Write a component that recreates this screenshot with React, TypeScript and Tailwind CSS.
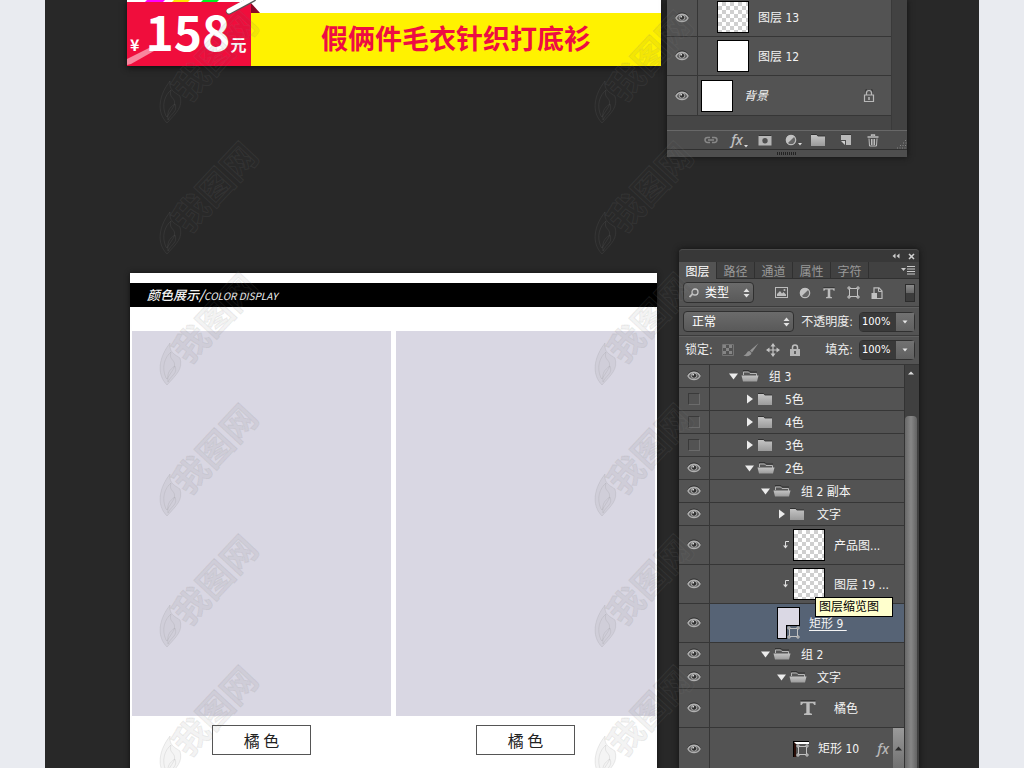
import { useState } from "react";
import type { ReactNode } from "react";

const uiFont = "font-['DejaVu_Sans_Condensed','Noto_Sans_CJK_SC',sans-serif]";
const artFont = "font-['Noto_Sans_CJK_SC',sans-serif]";
const checker =
  "bg-[conic-gradient(#cfcfcf_25%,#fff_0_50%,#cfcfcf_0_75%,#fff_0)] bg-[length:8px_8px]";

function Eye() {
  return (
    <svg width="14" height="12" viewBox="0 0 14 12" fill="none">
      <path d="M1 5C4-.2 10-.2 13 5" stroke="#2d2d2d" strokeWidth="1.2" />
      <path d="M1 6C3.5 1 10.500 1 13 6C10.500 10.800 3.500 10.800 1 6Z" stroke="#b0b0b0" strokeWidth="1.4" fill="#5c5c5c" />
      <circle cx="7" cy="5.600" r="2.700" fill="#303030" stroke="#b8b8b8" strokeWidth=".9" />
      <circle cx="6.200" cy="4.700" r=".9" fill="#ddd" />
    </svg>
  );
}

function EyeToggle({ name, on = true }: { name: string; on?: boolean }) {
  const [visible, setVisible] = useState(on);
  return (
    <button
      type="button"
      aria-label={`可见性 ${name}`}
      aria-pressed={visible}
      onClick={() => setVisible(!visible)}
      className="flex w-[31px] shrink-0 items-center justify-center self-stretch border-r border-[#363636] bg-[#535353]"
    >
      {visible ? <Eye /> : <span className="size-3 border border-[#6b6b6b] border-t-[#3a3a3a] border-l-[#3a3a3a]" />}
    </button>
  );
}

function Folder({ open }: { open?: boolean }) {
  return (
    <svg width="18" height="14" viewBox="0 0 18 14" className="shrink-0">
      <defs>
        <linearGradient id="folder" x1="0" y1="0" x2="0" y2="1">
          <stop offset="0" stopColor="#c4c4c4" />
          <stop offset="1" stopColor="#9b9b9b" />
        </linearGradient>
      </defs>
      {open ? (
        <>
          <path d="M2.500 6V3h5l1.500 1.500h6.500V7" fill="#555" stroke="#b5b5b5" />
          <path d="M2 1.500h6l1.500 1.500H16" fill="none" stroke="#333" />
          <path d="M.5 6.500H17.500L16 12.500H2Z" fill="url(#folder)" />
        </>
      ) : (
        <>
          <path d="M1 1.500h5.500L8 3h7" fill="none" stroke="#303030" />
          <path d="M1 2H6.500L8 3.500H15V13H1Z" fill="url(#folder)" />
        </>
      )}
    </svg>
  );
}

function Triangle({ open }: { open?: boolean }) {
  return (
    <svg width="12" height="12" viewBox="0 0 12 12" className="shrink-0">
      <path d={open ? "M2 3.500H11L6.500 9.500Z" : "M4 1.500V10.500L10 6Z"} fill="#ececec" />
    </svg>
  );
}

function VectorBox({ size = 13 }: { size?: number }) {
  return (
    <svg width={size} height={size} viewBox="0 0 13 13" fill="none" stroke="#c2c2c2">
      <path d="M2.500 2.500h8v8h-8z" />
      <path d="M1 1h2v2H1zM10 1h2v2h-2zM1 10h2v2H1zM10 10h2v2h-2z" fill="#666" />
    </svg>
  );
}

function TypeIcon({ size = 12 }: { size?: number }) {
  return (
    <svg width={size} height={size} viewBox="0 0 16 16">
      <path d="M.5 1.500h15V5h-1.200L13 3.200H9.700V13l2.300.8V15H4v-1.200l2.300-.8V3.200H3L1.700 5H.5Z" fill="#bcbcbc" />
      <path d="M.5.8h15" stroke="#2e2e2e" />
    </svg>
  );
}

function HalfCircle() {
  return (
    <svg width="12" height="12" viewBox="0 0 12 12">
      <circle cx="6" cy="6" r="4.700" fill="#666" stroke="#bcbcbc" strokeWidth="1.200" />
      <path d="M9.600 2.400A5 5 0 0 0 2.400 9.600Z" fill="#c2c2c2" />
    </svg>
  );
}

function LockIcon() {
  return (
    <svg width="12" height="14" viewBox="0 0 12 14">
      <path d="M3.500 7V4.500a2.500 2.500 0 0 1 5 0V7" fill="none" stroke="#c0c0c0" strokeWidth="1.500" />
      <rect x="1" y="6" width="10" height="7" fill="#b5b5b5" />
      <path d="M6 8v3" stroke="#444" strokeWidth="1.500" />
    </svg>
  );
}

function LockOutline() {
  return (
    <svg width="12" height="14" viewBox="0 0 12 14" fill="none" stroke="#b8b8b8">
      <path d="M2.500 2.500a3.500 3.500 0 0 1 7 0" stroke="#333" />
      <path d="M3.500 6V4a2.500 2.500 0 0 1 5 0V6M1.500 6h9v6.500h-9z" strokeWidth="1.200" />
      <path d="M6 8v3" strokeWidth="1.500" />
    </svg>
  );
}

function ClipArrow() {
  return (
    <svg width="8" height="10" viewBox="0 0 8 10" className="shrink-0">
      <path d="M7 1.500H3.500V6" fill="none" stroke="#ddd" />
      <path d="M1 5.500h5L3.500 8.500Z" fill="#ddd" />
    </svg>
  );
}

function GroupRow({ name, depth, open, on = true }: { name: string; depth: 1 | 2 | 3 | 4; open?: boolean; on?: boolean }) {
  const indent = { 1: "pl-[17px]", 2: "pl-[33px]", 3: "pl-[49px]", 4: "pl-[65px]" }[depth];
  return (
    <li className="flex h-[23px] items-center border-b border-[#363636] bg-[#535353]">
      <EyeToggle name={name} on={on} />
      <button type="button" aria-expanded={!!open} className={`flex items-center ${indent}`}>
        <Triangle open={open} />
        <span className="ml-0.5 flex"><Folder open={open} /></span>
        <span className="ml-2.5 pt-0.5">{name}</span>
      </button>
    </li>
  );
}

function LayerRow({ name, children, className = "", tail, height = "h-[39px]" }: { name: string; children: ReactNode; className?: string; tail?: ReactNode; height?: string }) {
  return (
    <li className={`flex items-center border-b border-[#363636] ${height}`}>
      <EyeToggle name={name} />
      <div className={`flex h-full min-w-0 flex-1 items-center ${className}`}>
        {children}
        {tail}
      </div>
    </li>
  );
}

function Price() {
  return (
    <div className="flex">
      <div className="relative h-[66px] w-[124px] bg-white pt-0.5">
        <div className="flex h-16 items-end bg-[#f00d3c] pl-[3px] text-white">
          <span className="pb-3 text-base leading-5 font-bold">¥</span>
          <span className="pb-2 pl-1.5 text-5xl leading-[56px] font-bold">158</span>
          <span className="pb-3 text-base leading-5 font-bold">元</span>
        </div>
        <svg className="absolute top-0 left-0" width="134" height="66" viewBox="0 0 134 66">
          <path d="M20 0h18l-2 2H18Z" fill="#f0f" />
          <path d="M47 0h16l-2 2H45Z" fill="#ffe600" />
          <path d="M76 0h16l-2 2H74Z" fill="#00f020" />
          <path d="M124 3v10h9Z" fill="#8c0726" />
          <path d="M102 11.500L126-1" stroke="#555" strokeWidth="6" strokeLinecap="round" />
          <path d="M102 11L126-2" stroke="#fff" strokeWidth="5" strokeLinecap="round" />
          <path d="M0 59L24 47L27 51L4 64L0 65Z" fill="#fff" opacity=".5" />
        </svg>
      </div>
      <div className="flex-1 bg-white pt-[13px]">
        <h1 className="h-[53px] bg-[#fff200] text-center text-[27px] leading-[50px] font-bold text-[#ee0d42]">假俩件毛衣针织打底衫</h1>
      </div>
    </div>
  );
}

function BottomTools() {
  const tools: { label: string; icon: ReactNode }[] = [
    {
      label: "链接图层",
      icon: (
        <svg width="14" height="8" viewBox="0 0 14 8" fill="none" stroke="#888" strokeWidth="1.500">
          <path d="M6 1.500H3.500a2.500 2.500 0 0 0 0 5H6M8 1.500h2.500a2.500 2.500 0 0 1 0 5H8M4 4h6" />
        </svg>
      ),
    },
    {
      label: "添加图层样式",
      icon: (
        <span className="flex items-end pl-1 font-['Noto_Sans',sans-serif] text-sm leading-4 font-medium text-[#c0c0c0] italic">
          fx
          <svg width="5" height="3" viewBox="0 0 5 3"><path d="M1 0h4L3 2.500Z" fill="#ddd" /></svg>
        </span>
      ),
    },
    {
      label: "添加蒙版",
      icon: (
        <svg width="14" height="11" viewBox="0 0 14 11">
          <path d="M1 .5h12" stroke="#333" />
          <rect x=".5" y="1" width="13" height="9.500" fill="#b5b5b5" />
          <circle cx="7" cy="5.700" r="2.700" fill="#505050" />
        </svg>
      ),
    },
    {
      label: "创建调整图层",
      icon: (
        <span className="flex items-end pl-1">
          <HalfCircle />
          <svg width="5" height="3" viewBox="0 0 5 3"><path d="M1 0h4L3 2.500Z" fill="#ddd" /></svg>
        </span>
      ),
    },
    { label: "创建新组", icon: <Folder /> },
    {
      label: "创建新图层",
      icon: (
        <svg width="12" height="12" viewBox="0 0 12 12">
          <path d="M1 1h10v10H6V6H1Z" fill="#b8b8b8" />
          <path d="M1 7h4v4Z" fill="#cfcfcf" />
          <path d="M1 .5h10" stroke="#333" />
        </svg>
      ),
    },
    {
      label: "删除图层",
      icon: (
        <svg width="12" height="13" viewBox="0 0 12 13" fill="none" stroke="#bcbcbc">
          <path d="M4.500 2V1h3v1M.5 3h11" strokeWidth="1.300" />
          <path d="M2 4.500l.5 7.500h7l.5-7.500M4.500 5v6M6 5v6M7.500 5v6" />
        </svg>
      ),
    },
  ];
  return (
    <div className="flex h-5 items-center border-y border-t-[#686868] border-b-[#303030] bg-[#4c4c4c] pl-[30px]">
      {tools.map((t) => (
        <button key={t.label} type="button" aria-label={t.label} className="flex w-[27px] items-center justify-center">
          {t.icon}
        </button>
      ))}
      <svg className="mt-auto ml-auto" width="11" height="11" viewBox="0 0 11 11">
        <path d="M1 10h10M4 7.500h7M7 5h4M9 2.500h2" stroke="#858585" strokeDasharray="1 1.500" />
      </svg>
    </div>
  );
}

function SmallPanel() {
  return (
    <aside aria-label="图层面板" className={`w-60 shrink-0 bg-[#424242] text-xs text-[#f2f2f2] shadow-[0_0_6px_#111] ${uiFont}`}>
      <ul className="mr-[15px] border-r border-[#3a3a3a] bg-[#464646] pb-[14px]">
        <li className="flex h-[37px] items-center border-b border-[#363636] bg-[#535353]">
          <EyeToggle name="图层 13" />
          <span className={`mb-0.5 ml-[19px] size-8 border border-black ${checker}`} />
          <span className="ml-[9px]">图层 13</span>
        </li>
        <li className="flex h-[39px] items-center border-b border-[#363636] bg-[#535353]">
          <EyeToggle name="图层 12" />
          <span className="ml-[19px] size-8 border border-black bg-white" />
          <span className="ml-[9px] pt-0.5">图层 12</span>
        </li>
        <li className="flex h-10 items-center border-b border-[#363636] bg-[#535353]">
          <EyeToggle name="背景" />
          <span className="ml-[3px] size-8 border border-black bg-white" />
          <span className="ml-[11px] italic">背景</span>
          <span className="mr-4 ml-auto"><LockOutline /></span>
        </li>
      </ul>
      <BottomTools />
      <div className="flex h-[7px] items-center justify-center bg-[#4e4e4e]">
        <span className="h-[3px] w-5 bg-[repeating-linear-gradient(90deg,#222_0_1px,#4e4e4e_1px_2px)]" />
      </div>
    </aside>
  );
}

function SelectMarks() {
  return (
    <svg className="pointer-events-none absolute top-1/2 right-1 -translate-y-1/2" width="7" height="10" viewBox="0 0 7 10">
      <path d="M.5 4L3.500 .5L6.500 4ZM.5 6L3.500 9.500L6.500 6Z" fill="#e2e2e2" />
    </svg>
  );
}

function Percent({ id, label }: { id: string; label: string }) {
  return (
    <div className="flex items-center">
      <label htmlFor={id} className="mr-1.5">{label}</label>
      <div className="flex h-5 rounded-sm border border-[#303030]">
        <input id={id} defaultValue="100%" className="w-9 bg-[#3a3a3a] pl-0.5 text-[11px] text-white outline-none" />
        <button type="button" aria-label={`${label}选项`} className="flex w-[18px] items-center justify-center bg-linear-to-b from-[#727272] to-[#606060]">
          <svg width="6" height="4" viewBox="0 0 6 4"><path d="M.5.5h5L3 3.500Z" fill="#e6e6e6" /></svg>
        </button>
      </div>
    </div>
  );
}

function PanelControls() {
  const selectBox = "w-full appearance-none rounded-sm border border-[#303030] bg-linear-to-b from-[#6b6b6b] to-[#595959] h-[21px] text-white outline-none";
  const filters: { label: string; icon: ReactNode }[] = [
    {
      label: "像素图层",
      icon: (
        <svg width="13" height="11" viewBox="0 0 13 11">
          <rect x=".5" y=".5" width="12" height="10" fill="none" stroke="#bcbcbc" />
          <path d="M2 9V7l3-3 2 2.500L8.500 5 11 7.500V9Z" fill="#bcbcbc" />
          <circle cx="9.500" cy="3" r="1" fill="#bcbcbc" />
        </svg>
      ),
    },
    { label: "调整图层", icon: <HalfCircle /> },
    { label: "文字图层", icon: <TypeIcon /> },
    { label: "形状图层", icon: <VectorBox size={13} /> },
    {
      label: "智能对象",
      icon: (
        <svg width="12" height="12" viewBox="0 0 12 12">
          <path d="M3 7V.8h5L11 4v7.500H6" fill="none" stroke="#bcbcbc" strokeWidth="1.200" />
          <path d="M7.500 1v3.500H11" fill="none" stroke="#bcbcbc" />
          <rect x=".5" y="6" width="5.500" height="6" fill="#c2c2c2" />
        </svg>
      ),
    },
  ];
  return (
    <div className="bg-[#535353] leading-4 text-[#eee]">
      <div className="flex h-7 items-center border-b border-[#3b3b3b] px-1">
        <div className="relative w-[71px]">
          <svg className="pointer-events-none absolute top-1.5 left-1.5" width="10" height="10" viewBox="0 0 10 10" fill="none" stroke="#c8c8c8">
            <circle cx="6" cy="4" r="3" strokeWidth="1.300" />
            <path d="M3.500 6L.5 9" strokeWidth="1.800" />
          </svg>
          <select aria-label="过滤类型" className={`${selectBox} pl-[21px]`}>
            <option>类型</option>
          </select>
          <SelectMarks />
        </div>
        <div className="ml-[15px] flex">
          {filters.map((f) => (
            <button key={f.label} type="button" aria-label={f.label} className="flex w-6 items-center justify-center">{f.icon}</button>
          ))}
        </div>
        <button type="button" aria-label="打开过滤" className="ml-auto flex h-[18px] w-2.5 flex-col border border-[#2c2c2c] bg-[#3c3c3c]">
          <span className="h-2 w-full bg-linear-to-b from-[#8a8a8a] to-[#666]" />
        </button>
      </div>
      <div className="flex h-[29px] items-center justify-between border-t border-b border-t-[#606060] border-b-[#3b3b3b] px-1">
        <div className="relative w-[111px]">
          <select aria-label="混合模式" className={`${selectBox} pl-2`}>
            <option>正常</option>
          </select>
          <SelectMarks />
        </div>
        <Percent id="opacity" label="不透明度:" />
      </div>
      <div className="flex h-[29px] items-center border-t border-b border-t-[#606060] border-b-[#363636] pr-1 pb-0.5 pl-1.5">
        <span>锁定:</span>
        <div className="ml-1 flex">
          <button type="button" aria-label="锁定透明像素" className="flex w-[23px] items-center justify-center">
            <svg width="12" height="12" viewBox="0 0 12 12" fill="#858585">
              <path d="M1 1h3v3H1zM7 1h3v3H7zM4 4h3v3H4zM1 7h3v3H1zM7 7h3v3H7z" />
              <path d="M.5.5h11v11H.5z" fill="none" stroke="#757575" />
            </svg>
          </button>
          <button type="button" aria-label="锁定图像像素" className="flex w-[22px] items-center justify-center">
            <svg width="16" height="14" viewBox="0 0 16 14" fill="#939393">
              <path d="M15.500.3L7 7.500l2 2ZM6.500 8c-3 0-2.500 3.500-6 4.500 3 1.500 8 .5 8-2.500Z" />
            </svg>
          </button>
          <button type="button" aria-label="锁定位置" className="flex w-[22px] items-center justify-center">
            <svg width="14" height="14" viewBox="0 0 14 14">
              <path d="M7 2v10M2 7h10" stroke="#c4c4c4" strokeWidth="1.200" />
              <path d="M7 0L9.500 3.500h-5ZM7 14L9.500 10.500h-5ZM0 7L3.500 4.500v5ZM14 7L10.500 4.500v5Z" fill="#c4c4c4" />
            </svg>
          </button>
          <button type="button" aria-label="锁定全部" className="flex w-[22px] items-center justify-center"><LockIcon /></button>
        </div>
        <div className="ml-auto"><Percent id="fill" label="填充:" /></div>
      </div>
    </div>
  );
}

function MainPanel() {
  const tabs = ["图层", "路径", "通道", "属性", "字符"];
  return (
    <aside aria-label="图层" className={`w-60 shrink-0 rounded-t bg-[#3f3f3f] text-xs text-[#f4f4f4] shadow-[0_0_6px_#111] ${uiFont}`}>
      <div className="flex h-[13px] items-center justify-end gap-2 rounded-t border-t border-[#4c4c4c] bg-[#383838] pr-1">
        <button type="button" aria-label="折叠">
          <svg width="8" height="6" viewBox="0 0 8 6" className="block"><path d="M3.500.5v5L.5 3ZM7.500.5v5L4.500 3Z" fill="#ccc" /></svg>
        </button>
        <button type="button" aria-label="关闭">
          <svg width="7" height="7" viewBox="0 0 7 7" className="block"><path d="M1 1L6 6M6 1L1 6" stroke="#d0d0d0" strokeWidth="1.500" /></svg>
        </button>
      </div>
      <div role="tablist" className="flex h-[17px] bg-[#414141]">
        {tabs.map((t, i) => (
          <button
            key={t}
            type="button"
            role="tab"
            aria-selected={i === 0}
            className={`w-[38px] border-r border-[#303030] pt-0.5 leading-4 ${i === 0 ? "bg-[#535353] text-white" : "border-b text-[#999]"}`}
          >
            {t}
          </button>
        ))}
        <button type="button" aria-label="面板菜单" className="flex flex-1 items-center justify-end border-b border-[#303030] pr-1">
          <svg width="14" height="9" viewBox="0 0 14 9">
            <path d="M0 2h5L2.500 5Z" fill="#c8c8c8" />
            <path d="M6 .5h8M6 3h8M6 5.500h8M6 8h8" stroke="#c8c8c8" />
          </svg>
        </button>
      </div>
      <PanelControls />
      <div className="flex">
        <ul className="min-w-0 flex-1 bg-[#535353]">
          <GroupRow name="组 3" depth={1} open />
          <GroupRow name="5色" depth={2} on={false} />
          <GroupRow name="4色" depth={2} on={false} />
          <GroupRow name="3色" depth={2} on={false} />
          <GroupRow name="2色" depth={2} open />
          <GroupRow name="组 2 副本" depth={3} open />
          <GroupRow name="文字" depth={4} />
          <LayerRow name="产品图..." className="pl-[72px]">
            <ClipArrow />
            <span className={`ml-[3px] size-8 border border-black ${checker}`} />
            <span className="ml-[9px] pt-0.5">产品图...</span>
          </LayerRow>
          <LayerRow name="图层 19" className="relative pl-[72px]">
            <ClipArrow />
            <span className={`ml-[3px] size-8 border border-black ${checker}`} />
            <span className="ml-[9px] pt-0.5">图层 19 ...</span>
            <span role="tooltip" className="absolute top-8 left-[105px] z-10 w-[78px] border border-black bg-[#ffffcd] pl-[3px] leading-[18px] text-black">
              图层缩览图
            </span>
          </LayerRow>
          <LayerRow name="矩形 9" className="bg-[#566375] pl-[67px]">
            <span className="relative h-8 w-[23px] border border-black bg-[#dad8e4]">
              <span className="absolute top-[17px] left-2 border-t border-l border-black bg-[#566375]"><VectorBox /></span>
            </span>
            <span className="ml-[9px] pt-0.5 underline underline-offset-2">矩形 9&nbsp;</span>
          </LayerRow>
          <GroupRow name="组 2" depth={3} open />
          <GroupRow name="文字" depth={4} open />
          <LayerRow name="橘色" className="pl-[90px]">
            <TypeIcon size={16} />
            <span className="ml-[18px] pt-0.5">橘色</span>
          </LayerRow>
          <LayerRow
            name="矩形 10"
            className="pl-[83px]"
            height="h-[42px]"
            tail={
              <>
                <span className="mr-1 ml-auto font-['Noto_Sans',sans-serif] text-sm leading-4 font-medium text-[#b8b8b8] italic">fx</span>
                <button type="button" aria-label="展开效果" className="flex w-[11px] items-center justify-center self-stretch bg-linear-to-b from-[#9a9a9a] to-[#707070]">
                  <svg width="7" height="5" viewBox="0 0 7 5"><path d="M0 4.500h7L3.500.5Z" fill="#2b2b2b" /></svg>
                </button>
              </>
            }
          >
            <span className="border border-r-0 border-b-0 border-black">
              <span className="flex border-t-2 border-l-2 border-t-white border-l-[#2b0e08] bg-[#535353]"><VectorBox /></span>
            </span>
            <span className="ml-[9px]">矩形 10</span>
          </LayerRow>
        </ul>
        <div className="flex w-[15px] flex-col items-stretch border-l border-[#333] bg-[#404040] pr-0.5">
          <button type="button" aria-label="向上滚动" className="flex h-[51px] justify-center pt-1.5">
            <svg width="6" height="4" viewBox="0 0 6 4"><path d="M0 3.500h6L3 .5Z" fill="#ddd" /></svg>
          </button>
          <div className="flex-1 rounded-t-sm bg-linear-to-r from-[#686868] via-[#878787] to-[#646464]" />
        </div>
      </div>
    </aside>
  );
}

function Swatch({ name }: { name: string }) {
  return (
    <figure className="flex flex-col items-center">
      <div className="h-[385px] w-full bg-[#d9d7e3]" />
      <figcaption className="mt-[9px] h-[30px] w-[99px] border border-[#555] text-center text-base leading-7 text-[#222]">{name}</figcaption>
    </figure>
  );
}

function Watermark() {
  return (
    <svg className="block shrink-0 overflow-visible" width="112" height="131" viewBox="0 0 112 131">
      <g fill="rgba(65,65,65,.06)" stroke="rgba(125,125,125,.15)">
        <path d="M9 123C-2 112 1 95 12 81C11 90 16 92 22 96C25 107 19 112 9 123Z" />
        <path d="M8 116C3 105 7 95 13 90C10 99 19 97 16 106L9 117Z" fill="none" />
        <path d="M10 120C9 111 11 108 17 104C20 112 13 113 10 120Z" fill="none" />
        <text
          transform="translate(22 95) rotate(-47)"
          y="12"
          fontSize="35"
          fontWeight="bold"
          fontFamily="Noto Sans CJK SC, sans-serif"
        >
          我图网
        </text>
      </g>
    </svg>
  );
}

export default function App() {
  return (
    <div className="h-screen overflow-hidden bg-[#e9ebf0] px-[45px]">
      <main className={`relative h-full overflow-hidden bg-[#282828] ${artFont}`}>
        <section className="flex h-[249px] items-start gap-1.5 pl-[82px]">
          <div className="w-[534px] shrink-0 shadow-[0_2px_6px_#111]">
            <Price />
          </div>
          <SmallPanel />
        </section>
        <section className="flex items-start gap-[22px] pl-[85px]">
          <article className="mt-6 min-h-[520px] w-[527px] shrink-0 bg-white pt-2.5 shadow-[0_0_5px_#111]">
            <h2 className="h-6 bg-black pl-[17px] text-[13px] leading-6 font-medium text-[#f4f4f4] italic">
              颜色展示/<span className="text-[10px] font-normal">COLOR DISPLAY</span>
            </h2>
            <div className="mt-6 grid grid-cols-2 gap-[5px] px-0.5">
              <Swatch name="橘 色" />
              <Swatch name="橘 色" />
            </div>
          </article>
          <MainPanel />
        </section>
        <div aria-hidden="true" className="pointer-events-none absolute top-0 left-[113px] z-20 flex gap-[323px]">
          {[0, 1].map((column) => (
            <div key={column}>
              {[0, 1, 2, 3, 4, 5].map((row) => (
                <Watermark key={row} />
              ))}
            </div>
          ))}
        </div>
      </main>
    </div>
  );
}
